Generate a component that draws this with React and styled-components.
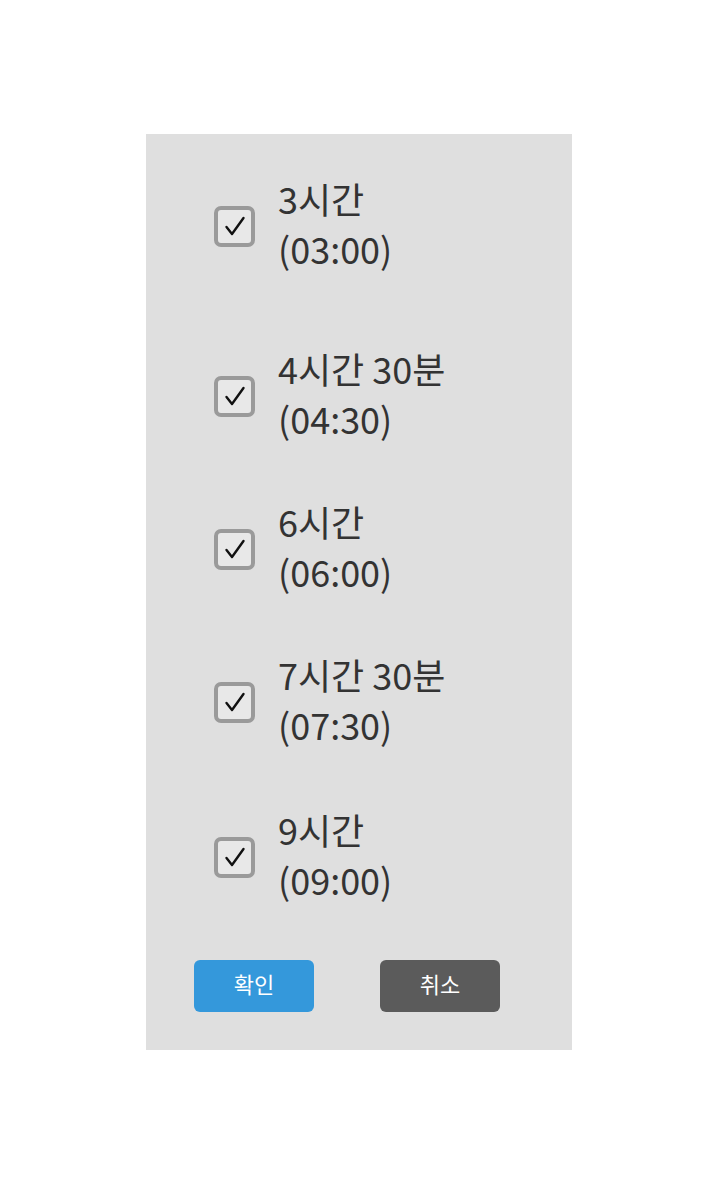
import React from 'react';
import styled, { createGlobalStyle } from 'styled-components';

const GlobalStyle = createGlobalStyle`
  html, body {
    margin: 0;
    padding: 0;
    background: #ffffff;
    font-family: "Noto Sans CJK KR", "Noto Sans", sans-serif;
  }
`;

const options = [
  { label: '3시간', time: '(03:00)', gap: 39 },
  { label: '4시간 30분', time: '(04:30)', gap: 64 },
  { label: '6시간', time: '(06:00)', gap: 47 },
  { label: '7시간 30분', time: '(07:30)', gap: 47 },
  { label: '9시간', time: '(09:00)', gap: 49 },
];

const App = () => (
  <>
    <GlobalStyle />
    <Page>
      <Panel>
        {options.map((opt) => (
          <OptionRow key={opt.time} $gap={opt.gap}>
            <CheckBox>
              <CheckMark viewBox="0 0 20 20">
                <path d="M1.5 11 L7 18 L18.5 2" />
              </CheckMark>
            </CheckBox>
            <OptionText>
              <span>{opt.label}</span>
              <span>{opt.time}</span>
            </OptionText>
          </OptionRow>
        ))}
        <ButtonRow>
          <Button $variant="primary">확인</Button>
          <Button>취소</Button>
        </ButtonRow>
      </Panel>
    </Page>
  </>
);

const Page = styled.div`
  display: flex;
  justify-content: center;
  padding-top: 134px;
  padding-right: 2px;
`;

const Panel = styled.div`
  width: 426px;
  background-color: #dfdfdf;
  display: flex;
  flex-direction: column;
  padding-bottom: 38px;
`;

const OptionRow = styled.div`
  display: flex;
  align-items: center;
  gap: 23px;
  padding-left: 68px;
  margin-top: ${(p) => p.$gap}px;
`;

const CheckBox = styled.div`
  width: 33px;
  height: 33px;
  border: 4px solid #9a9a9a;
  border-radius: 7px;
  background-color: #e8e8e8;
  display: flex;
  align-items: center;
  justify-content: center;
`;

const CheckMark = styled.svg`
  width: 20px;
  height: 20px;
  fill: none;
  stroke: #111111;
  stroke-width: 2.4;
  stroke-linecap: round;
  stroke-linejoin: round;
  overflow: visible;
`;

const OptionText = styled.div`
  display: flex;
  flex-direction: column;
  padding-bottom: 6px;
  font-size: 36px;
  line-height: 50px;
  color: #333333;
`;

const ButtonRow = styled.div`
  display: flex;
  gap: 66px;
  padding-left: 48px;
  margin-top: 50px;
`;

const Button = styled.button`
  width: 120px;
  height: 52px;
  border: none;
  border-radius: 6px;
  background-color: ${(p) => (p.$variant === 'primary' ? '#3498db' : '#5b5b5b')};
  color: #ffffff;
  font-family: "Noto Sans CJK KR", "Noto Sans", sans-serif;
  font-size: 22px;
  padding: 0 0 6px;
  cursor: pointer;
`;

export default App;
